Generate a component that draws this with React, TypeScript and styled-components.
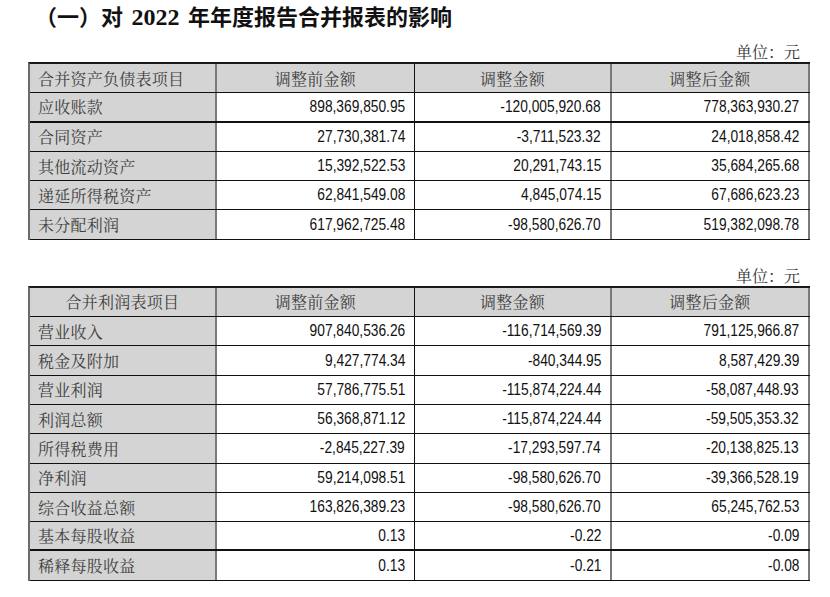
import styled, { createGlobalStyle } from "styled-components";

type Row = { name: string; before: string; change: string; after: string; thick?: boolean };

const balanceRows: Row[] = [
  { name: "应收账款", before: "898,369,850.95", change: "-120,005,920.68", after: "778,363,930.27", thick: true },
  { name: "合同资产", before: "27,730,381.74", change: "-3,711,523.32", after: "24,018,858.42" },
  { name: "其他流动资产", before: "15,392,522.53", change: "20,291,743.15", after: "35,684,265.68" },
  { name: "递延所得税资产", before: "62,841,549.08", change: "4,845,074.15", after: "67,686,623.23" },
  { name: "未分配利润", before: "617,962,725.48", change: "-98,580,626.70", after: "519,382,098.78" },
];

const profitRows: Row[] = [
  { name: "营业收入", before: "907,840,536.26", change: "-116,714,569.39", after: "791,125,966.87" },
  { name: "税金及附加", before: "9,427,774.34", change: "-840,344.95", after: "8,587,429.39" },
  { name: "营业利润", before: "57,786,775.51", change: "-115,874,224.44", after: "-58,087,448.93" },
  { name: "利润总额", before: "56,368,871.12", change: "-115,874,224.44", after: "-59,505,353.32" },
  { name: "所得税费用", before: "-2,845,227.39", change: "-17,293,597.74", after: "-20,138,825.13" },
  { name: "净利润", before: "59,214,098.51", change: "-98,580,626.70", after: "-39,366,528.19" },
  { name: "综合收益总额", before: "163,826,389.23", change: "-98,580,626.70", after: "65,245,762.53" },
  { name: "基本每股收益", before: "0.13", change: "-0.22", after: "-0.09", thick: true },
  { name: "稀释每股收益", before: "0.13", change: "-0.21", after: "-0.08" },
];

function ReportTable({ title, titleCentered, rows }: { title: string; titleCentered?: boolean; rows: Row[] }) {
  return (
    <>
      <Unit>单位：元</Unit>
      <Table>
        <Line>
          <Cell $shade $align={titleCentered ? "center" : "left"} $edge="grey">
            <Label>{title}</Label>
          </Cell>
          <Cell $shade $align="center">
            <Label>调整前金额</Label>
          </Cell>
          <Cell $shade $align="center" $edge="grey">
            <Label>调整金额</Label>
          </Cell>
          <Cell $shade $align="center" $edge="grey">
            <Label>调整后金额</Label>
          </Cell>
        </Line>
        {rows.map((r) => (
          <Line key={r.name} $thick={r.thick}>
            <Cell $shade $align="left" $edge="grey">
              <Label>{r.name}</Label>
            </Cell>
            <Cell $align="right">
              <Num>{r.before}</Num>
            </Cell>
            <Cell $align="right" $edge="grey">
              <Num>{r.change}</Num>
            </Cell>
            <Cell $align="right" $edge="grey">
              <Num>{r.after}</Num>
            </Cell>
          </Line>
        ))}
      </Table>
    </>
  );
}

export default function App() {
  return (
    <Page>
      <GlobalStyle />
      <Title>
        （一）对 <Year>2022</Year> 年年度报告合并报表的影响
      </Title>
      <ReportTable title="合并资产负债表项目" rows={balanceRows} />
      <Spacer />
      <ReportTable title="合并利润表项目" titleCentered rows={profitRows} />
    </Page>
  );
}

const GlobalStyle = createGlobalStyle`
  body {
    margin: 0;
    background: #fff;
  }
`;

const Page = styled.div`
  width: 830px;
  height: 597px;
  padding-left: 28px;
  box-sizing: border-box;
  display: flex;
  flex-direction: column;
  overflow: hidden;
`;

const Title = styled.h1`
  margin: 0 0 8px 7px;
  height: 34px;
  line-height: 34px;
  font-family: "Liberation Serif", "Noto Sans CJK SC", serif;
  font-size: 22px;
  font-weight: 700;
  color: #111;
  white-space: nowrap;
`;

const Year = styled.span`
  font-size: 24px;
  padding: 0 3px;
`;

const Unit = styled.div`
  width: 772px;
  height: 20px;
  line-height: 20px;
  text-align: right;
  font-family: "Noto Serif CJK SC", "Noto Sans CJK SC", serif;
  font-size: 16px;
  color: #333;
`;

const Spacer = styled.div`
  height: 26px;
`;

const Table = styled.div`
  width: 782px;
  box-sizing: border-box;
  border-top: 2px solid #1a1a1a;
  border-left: 2px solid #6b6b6b;
  display: flex;
  flex-direction: column;
`;

const Line = styled.div<{ $thick?: boolean }>`
  display: grid;
  grid-template-columns: 187px 198px 197px 198px;
  height: 29.3px;
  box-sizing: border-box;
  border-bottom: ${({ $thick }) => ($thick ? "2px solid #111" : "1px solid #111")};
`;

const Cell = styled.div<{ $shade?: boolean; $align: "left" | "center" | "right"; $edge?: "grey" }>`
  display: flex;
  align-items: center;
  justify-content: ${({ $align }) => ($align === "left" ? "flex-start" : $align === "center" ? "center" : "flex-end")};
  padding: 0 ${({ $align }) => ($align === "right" ? "9px" : "0")} 0 ${({ $align }) => ($align === "left" ? "8px" : "0")};
  background: ${({ $shade }) => ($shade ? "#d4d4d4" : "#fff")};
  border-right: ${({ $edge }) => ($edge ? "2px solid #7a7a7a" : "1px solid #111")};
  overflow: hidden;
`;

const Label = styled.span`
  font-family: "Noto Serif CJK SC", "Noto Sans CJK SC", serif;
  font-size: 16px;
  letter-spacing: 0.25px;
  color: #404040;
  white-space: nowrap;
`;

/* no narrow Arial in the sandbox, so squeeze Liberation Sans to its width */
const Num = styled.span`
  display: inline-block;
  font-family: "Liberation Sans", Arial, sans-serif;
  font-size: 16px;
  color: #111;
  white-space: nowrap;
  transform: scaleX(0.86);
  transform-origin: right center;
`;
